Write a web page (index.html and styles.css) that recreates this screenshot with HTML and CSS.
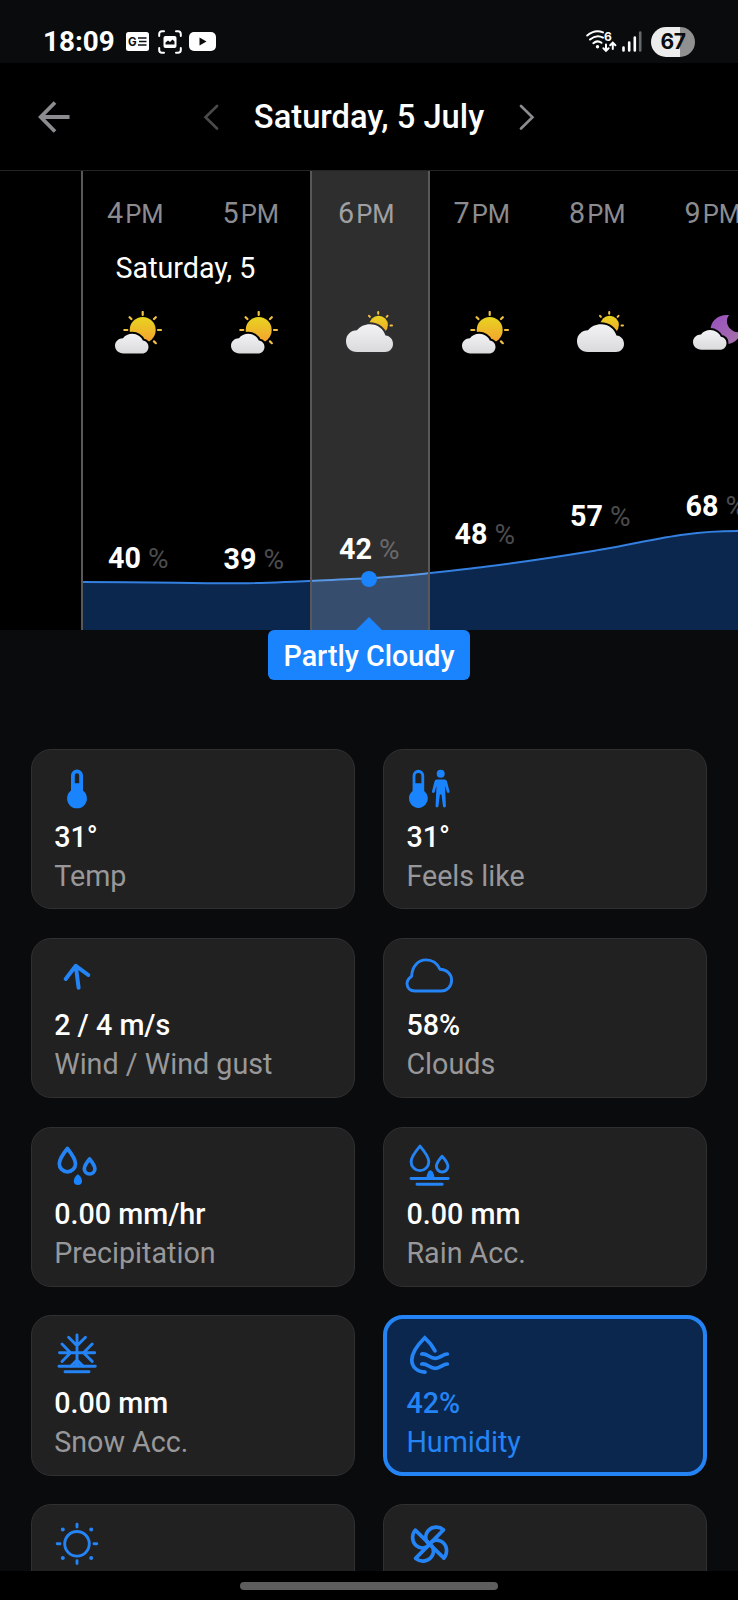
FILE: index.html
```html
<!DOCTYPE html>
<html lang="en">
<head>
    <meta charset="UTF-8">
    <meta name="viewport" content="width=device-width, initial-scale=1.0">
    <title>Saturday, 5 July</title>
    <link rel="stylesheet" href="styles.css">
</head>
<body>

    <!-- Weather symbols used in the hourly strip -->
    <svg class="defs" width="0" height="0">
        <defs>
            <linearGradient id="sunFill" x1="0" y1="0" x2="0" y2="1">
                <stop offset="0" stop-color="#e8d420"/>
                <stop offset="1" stop-color="#f5a030"/>
            </linearGradient>
            <linearGradient id="cloudFill" x1="0" y1="0" x2="0" y2="1">
                <stop offset="0" stop-color="#f3f3f5"/>
                <stop offset="1" stop-color="#dadadc"/>
            </linearGradient>
            <linearGradient id="moonFill" x1="0" y1="0" x2="1" y2="1">
                <stop offset="0" stop-color="#9650c0"/>
                <stop offset="1" stop-color="#a872a8"/>
            </linearGradient>
        </defs>
        <symbol id="sunny" viewBox="0 0 48 44">
            <circle cx="27.7" cy="19" r="13" fill="url(#sunFill)"/>
            <path d="M27.7 1v3M9.3 19h3M43 19h3M39 8l1.8-1.8M16.4 8l-1.8-1.8M39 30.4l1.8 1.8" stroke="#f3c245" stroke-width="2.2" stroke-linecap="round"/>
            <path class="cloud" d="M8.5 42.5C3.5 42.5 0 39 0 34.8C0 30.5 3.5 27.3 8 27.3C10 24.3 13.5 22.8 17.3 22.8C22 22.8 26.3 25.8 27.8 29.5C31.2 30 33.5 32.5 33.5 36C33.5 39.8 30.6 42.5 27 42.5Z"/>
        </symbol>
        <symbol id="cloudy" viewBox="0 0 48 44">
            <circle cx="32.6" cy="14" r="9.3" fill="url(#sunFill)"/>
            <path d="M32.2 1v1.8M23 4.8l.9 1M41.5 4.8l-.9 1M44.5 14.5h1.5" stroke="#f3c245" stroke-width="2" stroke-linecap="round"/>
            <path class="cloud" d="M11 41C4.5 41 0 36.4 0 30.2C0 24 4.7 19.4 11 19.3C14 15.5 18.5 13.3 24 13.3C31.5 13.3 37.5 18 39.5 24.6C44 25 47 28.5 47 33C47 37.7 43.4 41 39 41Z"/>
        </symbol>
        <symbol id="night" viewBox="0 0 48 44">
            <path fill="url(#moonFill)" d="M36 4C25 3 17.5 10 17.5 19C17.5 27 25 33 33 33C41 33 46 28 48 21C42 23 33 17 34 9C34.3 7 35 5.5 36 4Z"/>
            <path class="cloud" transform="translate(0 -3.7)" d="M8.5 42.5C3.5 42.5 0 39 0 34.8C0 30.5 3.5 27.3 8 27.3C10 24.3 13.5 22.8 17.3 22.8C22 22.8 26.3 25.8 27.8 29.5C31.2 30 33.5 32.5 33.5 36C33.5 39.8 30.6 42.5 27 42.5Z"/>
        </symbol>
    </svg>

    <!-- Status bar -->
    <div class="status">
        <span class="clock">18:09</span>
        <svg class="news" width="23" height="19" viewBox="0 0 23 19">
            <rect width="23" height="19" rx="2.5" fill="#fff"/>
            <text x="2" y="13.6" class="g">G</text>
            <path d="M12 6h8.500M13 9.500h7.500M12 13h8.500" stroke="#0a0c0e" stroke-width="1.6"/>
        </svg>
        <svg class="shot" width="24" height="24" viewBox="0 0 24 24">
            <path d="M1.2 6V4a2.8 2.8 0 0 1 2.8-2.8h2M18 1.2h2A2.8 2.8 0 0 1 22.8 4v2M22.8 18v2a2.8 2.8 0 0 1-2.8 2.8h-2M6 22.8H4A2.8 2.8 0 0 1 1.2 20v-2" fill="none" stroke="#fff" stroke-width="2" stroke-linecap="round"/>
            <rect x="5.5" y="6" width="13" height="12" rx="2" fill="#fff"/>
            <path d="M7.5 14.5v-2l2.5-2 2 1.5 2.5-2.5 2 2v3z" fill="#0a0c0e"/>
        </svg>
        <svg class="tube" width="27" height="19" viewBox="0 0 27 19">
            <rect width="27" height="19" rx="5" fill="#fff"/>
            <path d="M10.5 5.5v8l7-4z" fill="#0a0c0e"/>
        </svg>
        <svg class="wifi" width="31" height="23" viewBox="0 0 31 23">
            <g fill="none" stroke="#fff" stroke-width="2" stroke-linecap="round">
                <path d="M1.2 5.5Q9 -1.2 17 2.4M4 9.5Q10.5 4 17 7.6M7.3 13.2Q11.3 9.8 15.5 12.8"/>
                <path d="M20 14.5v6M17.4 18.2l2.6 2.6 2.6-2.6M26.8 19v-6M24.2 15.3l2.6-2.6 2.6 2.6"/>
            </g>
            <circle cx="11.5" cy="16.8" r="1.7" fill="#fff"/>
            <text x="18" y="10.6" class="six">6</text>
        </svg>
        <svg class="signal" width="20" height="21" viewBox="0 0 20 21">
            <path d="M1.5 16.5v3M7.2 11.5v8M12.8 6.5v13" stroke="#fff" stroke-width="2.6" stroke-linecap="round"/>
            <path d="M18.2 1.5v18" stroke="#66686a" stroke-width="2.6" stroke-linecap="round"/>
        </svg>
        <span class="battery">67</span>
    </div>

    <!-- Day switcher -->
    <header class="topbar">
        <svg class="back" width="32" height="32" viewBox="0 0 32 32">
            <path d="M31.5 16H3M17 1.5L2.7 16L17 30.5" fill="none" stroke="#8c8c90" stroke-width="3.8"/>
        </svg>
        <svg class="chev" width="16" height="26" viewBox="0 0 16 26">
            <path d="M14 2L2.5 13.3L14 24.5" fill="none" stroke="#4a4a4c" stroke-width="2.6" stroke-linecap="round"/>
        </svg>
        <h1>Saturday, 5 July</h1>
        <svg class="chev" width="16" height="26" viewBox="0 0 16 26">
            <path d="M2 2L13.5 13.3L2 24.5" fill="none" stroke="#8c8c90" stroke-width="2.6" stroke-linecap="round"/>
        </svg>
    </header>

    <!-- Hourly humidity -->
    <section class="forecast">
        <svg class="chart" width="656" height="459" viewBox="0 0 656 459">
            <path fill="#0b274d" d="M0 411C80 411 110 412.6 159 412.3C200 412 250 408.5 287 407.2C330 405 375 398.8 403 395.7C450 390 480 385 518 378.8C550 373.5 575 367 603 363.5C620 361 640 360 656 360V459H0Z"/>
            <path fill="none" stroke="#3380e0" stroke-width="2" d="M0 411C80 411 110 412.6 159 412.3C200 412 250 408.5 287 407.2C330 405 375 398.8 403 395.7C450 390 480 385 518 378.8C550 373.5 575 367 603 363.5C620 361 640 360 656 360"/>
        </svg>
        <div class="hours">
            <div class="hour">
                <div class="time">4<small>PM</small></div>
                <div class="day">Saturday, 5</div>
                <svg class="sky"><use href="#sunny"/></svg>
                <div class="value" style="margin-bottom: 54px">40 <span>%</span></div>
            </div>
            <div class="hour">
                <div class="time">5<small>PM</small></div>
                <div class="day"></div>
                <svg class="sky"><use href="#sunny"/></svg>
                <div class="value" style="margin-bottom: 53px">39 <span>%</span></div>
            </div>
            <div class="hour selected">
                <div class="time">6<small>PM</small></div>
                <div class="day"></div>
                <svg class="sky"><use href="#cloudy"/></svg>
                <div class="value" style="margin-bottom: 63px">42 <span>%</span></div>
            </div>
            <div class="hour">
                <div class="time">7<small>PM</small></div>
                <div class="day"></div>
                <svg class="sky"><use href="#sunny"/></svg>
                <div class="value" style="margin-bottom: 78px">48 <span>%</span></div>
            </div>
            <div class="hour">
                <div class="time">8<small>PM</small></div>
                <div class="day"></div>
                <svg class="sky"><use href="#cloudy"/></svg>
                <div class="value" style="margin-bottom: 96px">57 <span>%</span></div>
            </div>
            <div class="hour">
                <div class="time">9<small>PM</small></div>
                <div class="day"></div>
                <svg class="sky"><use href="#night"/></svg>
                <div class="value" style="margin-bottom: 106px">68 <span>%</span></div>
            </div>
        </div>
        <span class="dot"></span>
        <div class="tooltip">Partly Cloudy</div>
    </section>

    <!-- Metric cards -->
    <main class="cards">
        <div class="card">
            <svg class="icon" viewBox="0 0 48 48">
                <path class="solid" fill-rule="evenodd" d="M18 10.5a6 6 0 0 1 12 0v15.100a9.900 9.900 0 1 1-12 0zM21.800 10.500v7.700h4.400v-7.700a2.200 2.200 0 0 0-4.400 0z"/>
            </svg>
            <b>31°</b>
            <p>Temp</p>
        </div>
        <div class="card">
            <svg class="icon" viewBox="0 0 48 48">
                <path class="solid" fill-rule="evenodd" d="M7.6 10.6a5.8 5.8 0 0 1 11.6 0v15.3a9.5 9.5 0 1 1-11.6 0zM10.4 11v7.2h6V11a3 3 0 0 0-6 0z"/>
                <circle class="solid" cx="35.7" cy="8.8" r="4"/>
                <path class="solid" d="M31.8 14.5h7.8c1.2 0 2 .8 2.4 2l2.5 9.8c.4 1.8-2 2.4-2.6.7l-1.9-6.2.9 19.9c0 2.2-2.8 2.3-3 .1L36.5 29.5h-1.6l-1.4 11.3c-.3 2.200-3 2.100-2.900-.1l.9-19.900-1.900 6.200c-.6 1.700-3 1.100-2.600-.7l2.500-9.800c.4-1.200 1.200-2 2.300-2z"/>
            </svg>
            <b>31°</b>
            <p>Feels like</p>
        </div>
        <div class="card">
            <svg class="icon" viewBox="0 0 48 48">
                <path stroke-width="4" d="M25.6 34.8L22.8 12.8M12.7 26L22.8 12.8L35.3 22"/>
            </svg>
            <b>2 / 4 m/s</b>
            <p>Wind / Wind gust</p>
        </div>
        <div class="card">
            <svg class="icon" viewBox="0 0 48 48">
                <path d="M10 38C5 38 2 34.8 2 30.6C2 27 3.8 25.2 6.6 23.2C7 13.5 13 6.9 21 6.9C27.5 6.9 32.5 10.8 35 16.2C41.5 16.2 46.6 21 46.6 27C46.6 33.5 42 38 36 38Z"/>
            </svg>
            <b>58%</b>
            <p>Clouds</p>
        </div>
        <div class="card">
            <svg class="icon" viewBox="0 0 48 48">
                <path class="bold" d="M14.4 6.5C10 12 6.3 17.5 6.3 21.7A8.1 8.1 0 0 0 22.5 21.7C22.5 17.5 18.8 12 14.4 6.5Z"/>
                <path class="bold" d="M36.6 17C33.5 20.8 31.3 24 31.3 26.7A5.3 5.3 0 0 0 41.9 26.7C41.9 24 39.7 20.8 36.6 17Z"/>
                <path class="solid" d="M24.9 32.3C22.8 33.5 20.8 36.5 20.8 39A4.1 4.1 0 0 0 29 39C29 36.5 27 33.5 24.9 32.3Z"/>
            </svg>
            <b>0.00 mm/hr</b>
            <p>Precipitation</p>
        </div>
        <div class="card">
            <svg class="icon" viewBox="0 0 48 48">
                <path d="M15 4.1C10 10 6.1 15.5 6.1 19.8A8.8 8.8 0 0 0 23.8 19.8C23.8 15.5 20 10 15 4.1Z"/>
                <path d="M37.1 14.2C33.5 18.2 31.4 21.5 31.4 24.3A5.7 5.7 0 0 0 42.9 24.3C42.9 21.5 40.7 18.2 37.1 14.2Z"/>
                <path class="solid" d="M21.4 36.5C21.4 32.5 23.3 28.2 25.4 28.2S29.5 32.5 29.5 36.5Z"/>
                <path d="M6 36.5H43.2M12 42.2H37.2"/>
            </svg>
            <b>0.00 mm</b>
            <p>Rain Acc.</p>
        </div>
        <div class="card">
            <svg class="icon" viewBox="0 0 48 48">
                <path d="M24 4V33M6.5 21.7H41.7M15.6 6.2L24 14.7L32.5 6.2M9 13L17.6 21.7L9 30.4M39.2 13L30.5 21.7L39.2 30.4M18 35L24 29L30 35"/>
                <path d="M6 35.3H42.3M12 40.7H36M23 34h2"/>
            </svg>
            <b>0.00 mm</b>
            <p>Snow Acc.</p>
        </div>
        <div class="card active">
            <svg class="icon" viewBox="0 0 48 48">
                <path class="bold" stroke-linejoin="miter" d="M30 19.8C27.5 15 24 10.5 19.8 6.8C12.5 14 6.8 22 6.8 29C6.800 35.800 12 40.800 20 41.100"/>
                <path class="bold" d="M16.8 23C22.5 22.3 24.5 27.3 30.3 27.3C35.5 27.3 37.5 23 42.3 23M16.8 33C22.5 32.3 24.5 37.3 30.3 37.3C35.5 37.3 37.5 33 42.3 33"/>
            </svg>
            <b>42%</b>
            <p>Humidity</p>
        </div>
        <div class="card">
            <svg class="icon" viewBox="0 0 48 48">
                <circle cx="24" cy="23.8" r="12.3"/>
                <path d="M24 4.2V7M24 40.8V43.6M4.2 23.8H7M41 23.8H43.8"/>
                <path stroke-width="4" d="M9.8 9.6h.01M38.2 9.6h.01M9.8 38h.01M38.2 38h.01"/>
            </svg>
        </div>
        <div class="card">
            <svg class="icon" viewBox="0 0 48 48">
                <g class="bold" transform="translate(24.6 24.1)">
                    <path d="M0 0L14 -14.3C9 -18.5 0 -18 -3.2 -10.5C-4.8 -6.5 -3.5 -2 0 0Z"/>
                    <path transform="rotate(90)" d="M0 0L14 -14.3C9 -18.5 0 -18 -3.2 -10.5C-4.8 -6.5 -3.5 -2 0 0Z"/>
                    <path transform="rotate(180)" d="M0 0L14 -14.3C9 -18.5 0 -18 -3.2 -10.5C-4.8 -6.5 -3.5 -2 0 0Z"/>
                    <path transform="rotate(270)" d="M0 0L14 -14.3C9 -18.5 0 -18 -3.2 -10.5C-4.8 -6.5 -3.5 -2 0 0Z"/>
                </g>
            </svg>
        </div>
    </main>

    <div class="navbar"><span></span></div>

</body>
</html>
```
FILE: styles.css
```css
* {
    box-sizing: border-box;
}
body {
    margin: 0;
    height: 1600px;
    display: flex;
    flex-direction: column;
    overflow: hidden;
    background-color: #090b0d;
    color: white;
    font-family: Roboto, sans-serif;
    font-size: 28.7px;
}
svg {
    display: block;
    flex: none;
}
.defs {
    position: absolute;
}

/* status bar */
.status {
    flex: none;
    height: 63px;
    display: flex;
    align-items: center;
    padding: 20px 43px 0;
}
.clock {
    width: 83px;
    font-size: 27.8px;
    font-weight: 700;
}
.shot {
    margin-left: 9px;
}
.tube {
    margin-left: 7px;
}
.g {
    font: 700 11.5px Inter, sans-serif;
    fill: #0a0c0e;
}
.six {
    font: 700 12px Inter, sans-serif;
    fill: white;
}
.wifi {
    margin-left: auto;
    overflow: visible;
}
.signal {
    margin: 0 9px 0 5px;
}
.battery {
    width: 44px;
    height: 30px;
    border-radius: 15px;
    background: linear-gradient(to right, #ececec 66%, #909090 66%);
    color: #0a0c0e;
    font: 700 21px/29px Inter, sans-serif;
    letter-spacing: -0.5px;
    text-align: center;
}

/* top bar */
.topbar {
    flex: none;
    height: 108px;
    display: flex;
    align-items: center;
    padding: 0 38px;
    background-color: black;
    border-bottom: 1px solid #242424;
}
.topbar h1 {
    width: 300px;
    margin: 1px 0 0;
    font-size: 32.7px;
    font-weight: 500;
    text-align: center;
    white-space: nowrap;
}
.back {
    margin-right: 133px;
}

/* hourly strip */
.forecast {
    flex: none;
    position: relative;
    height: 459px;
    margin-bottom: 119px;
    padding-left: 81px;
    background-color: black;
}
.chart {
    position: absolute;
    left: 82px;
    top: 0;
}
.hours {
    position: relative;
    display: flex;
    height: 100%;
    overflow: hidden;
    border-left: 2px solid #58585a;
}
.hour {
    --gap: black;
    position: relative;
    z-index: 0;
    flex: none;
    width: 115.5px;
    display: flex;
    flex-direction: column;
    padding: 24px 0 0 24px;
    white-space: nowrap;
}
.selected {
    --gap: #303032;
}
.selected::before {
    content: "";
    position: absolute;
    z-index: -1;
    top: 0;
    bottom: 0;
    left: -4px;
    right: 0;
    background-color: rgba(255, 255, 255, 0.18);
    border: solid #58585a;
    border-width: 0 2px;
}
.time {
    height: 36px;
    line-height: 36px;
    color: #8c8c90;
}
.time small {
    margin-left: 2px;
    font-size: 25.5px;
}
.selected .time {
    color: #a0a0a3;
}
.day {
    height: 36px;
    margin: 19px 0 0 8.5px;
    line-height: 36px;
}
.sky {
    width: 48px;
    height: 44px;
    margin: 25px 0 0 8px;
    overflow: visible;
}
.cloud {
    fill: url(#cloudFill);
    stroke: var(--gap);
    stroke-width: 4;
    paint-order: stroke;
}
.value {
    margin-top: auto;
    margin-left: 1px;
    line-height: 34px;
    font-weight: 700;
}
.value span {
    color: #4c4c4e;
    font-weight: 400;
    font-size: 28px;
}
.selected .value span {
    color: #69696b;
}
.dot {
    position: absolute;
    left: 361px;
    top: 400px;
    width: 16px;
    height: 16px;
    border-radius: 50%;
    background-color: #1a84ff;
}
.tooltip {
    position: absolute;
    left: 268px;
    top: 459px;
    width: 202px;
    height: 50px;
    border-radius: 6px;
    background-color: #1a84ff;
    font-weight: 500;
    line-height: 53px;
    text-align: center;
}
.tooltip::before {
    content: "";
    position: absolute;
    left: 87px;
    top: -13px;
    border: 14px solid transparent;
    border-top: 0;
    border-bottom-color: #1a84ff;
}

/* cards */
.cards {
    flex: 1;
    min-height: 0;
    overflow: hidden;
    display: grid;
    grid-template-columns: 1fr 1fr;
    grid-auto-rows: 160.4px;
    gap: 28.4px;
    padding: 0 31px;
}
.card {
    padding: 14.5px 0 0 22.2px;
    border: 1px solid #303030;
    border-radius: 20px;
    background-color: #212121;
}
.card b {
    display: block;
    margin-top: 5px;
    line-height: 39px;
    font-weight: 500;
}
.card p {
    margin: 0;
    line-height: 38px;
    color: #98989b;
}
.icon {
    width: 48px;
    height: 48px;
    margin-left: -1.5px;
    overflow: visible;
    fill: none;
    stroke: #2484f5;
    stroke-width: 2.9px;
    stroke-linecap: round;
    stroke-linejoin: round;
}
.icon .bold {
    stroke-width: 3.7px;
}
.icon .solid {
    fill: #1a84ff;
    stroke: none;
}
.active {
    padding: 11.5px 0 0 19.2px;
    border: 4px solid #2484f5;
    background-color: #0b274d;
}
.active b,
.active p {
    color: #2484f5;
}

/* gesture bar */
.navbar {
    flex: none;
    height: 29px;
    display: flex;
    justify-content: center;
    padding-top: 11px;
    background-color: black;
}
.navbar span {
    width: 258px;
    height: 8px;
    border-radius: 4px;
    background-color: #5e5e5e;
}
```
